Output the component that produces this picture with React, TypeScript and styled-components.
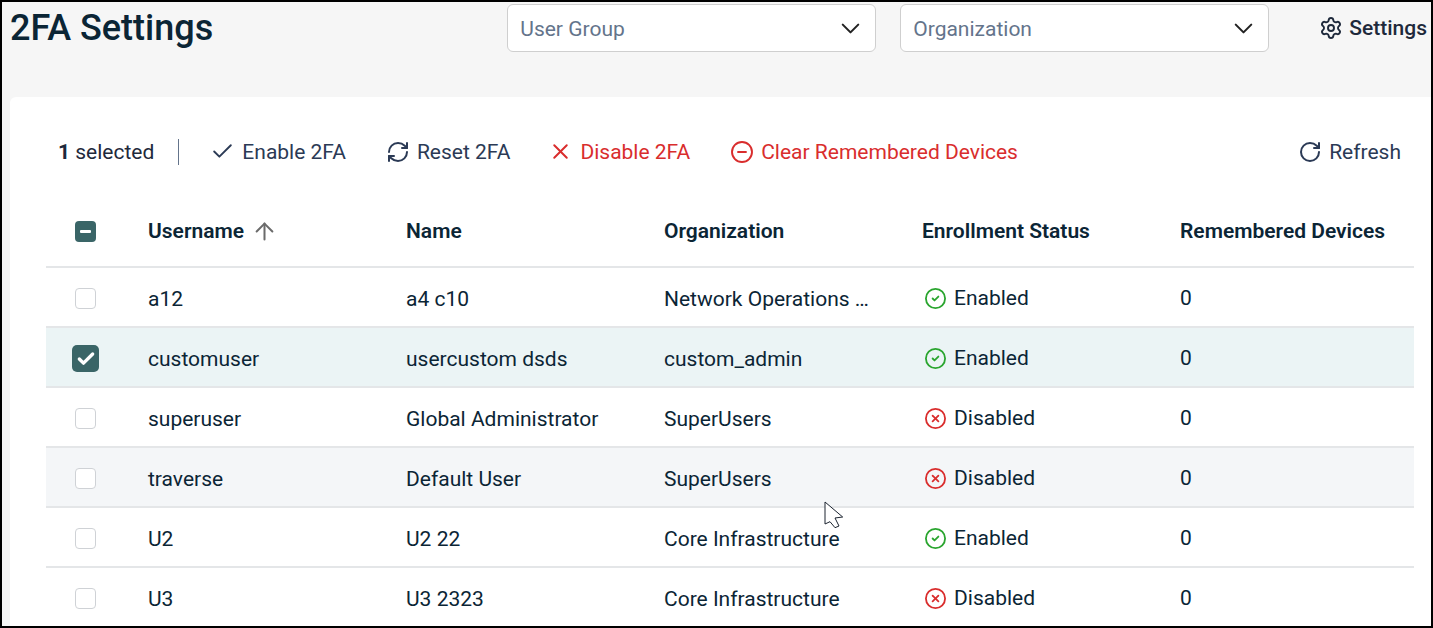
import styled, { createGlobalStyle } from 'styled-components';
import { Check, ChevronDown, ArrowUp, RefreshCw, RotateCw, X, CircleMinus, CircleCheck, CircleX, Settings } from 'lucide-react';

const GlobalStyle = createGlobalStyle`
  html, body {
    margin: 0;
    padding: 0;
    background: #fff;
    font-family: 'Roboto', 'Liberation Sans', sans-serif;
  }
  * { box-sizing: border-box; }
`;

/* Page frame */
const Frame = styled.div`
  position: relative;
  width: 1433px;
  height: 628px;
  border: 2px solid #000;
  background: #f6f6f6;
  overflow: hidden;
`;
const Header = styled.header`
  display: flex;
  align-items: flex-start;
  height: 95px;
  padding: 2px 4px 0 8px;
`;
const Title = styled.h1`
  margin: 0;
  flex: 1;
  font-size: 36px;
  line-height: 48px;
  font-weight: 500;
  color: #0b2535;
`;
const Select = styled.div`
  display: flex;
  align-items: center;
  justify-content: space-between;
  width: 369px;
  height: 48px;
  margin-right: 24px;
  padding: 1px 9px 0 12px;
  background: #fff;
  border: 1px solid #cfcfcf;
  border-radius: 6px;
  font-size: 21px;
  color: #64748b;
  svg { color: #222; margin-top: -1px; }
`;
const SettingsLink = styled.div`
  display: flex;
  align-items: center;
  gap: 6px;
  height: 48px;
  margin-left: 26px;
  font-size: 21px;
  font-weight: 500;
  color: #1e293b;
`;

/* White panel */
const Panel = styled.main`
  margin-left: 8px;
  height: 531px;
  padding: 0 17px 0 36px;
  background: #fff;
  border-radius: 6px 0 0 0;
`;
const Toolbar = styled.div`
  display: flex;
  align-items: center;
  height: 99px;
  padding: 10px 0 0 12px;
  font-size: 21px;
  color: #2b3a55;
`;
const SelectedCount = styled.span`
  color: #1e293b;
  padding-right: 24px;
  margin-right: 31px;
  border-right: 1px solid #64748b;
  line-height: 26px;
  b { font-weight: 700; }
`;
const Action = styled.div<{ $danger?: boolean; $push?: boolean; $after?: number }>`
  display: flex;
  align-items: center;
  gap: 7px;
  margin-right: ${(p) => p.$after ?? 40}px;
  margin-left: ${(p) => (p.$push ? 'auto' : '0')};
  color: ${(p) => (p.$danger ? '#d92d2d' : '#2b3a55')};
`;

/* Table */
const Row = styled.div<{ $head?: boolean; $selected?: boolean; $shade?: boolean }>`
  display: grid;
  grid-template-columns: 102px 258px 258px 258px 258px 234px;
  align-items: center;
  height: ${(p) => (p.$head ? '72px' : '60px')};
  padding-top: ${(p) => (p.$head ? '0' : '2px')};
  border-bottom: 2px solid #e4e6e8;
  font-size: 21px;
  color: #0b2535;
  font-weight: ${(p) => (p.$head ? 600 : 400)};
  background: ${(p) => (p.$selected ? '#ebf4f5' : p.$shade ? '#f4f6f8' : '#fff')};
  &:last-child { border-bottom-color: transparent; }
`;
const CheckCell = styled.div<{ $head?: boolean }>`
  display: flex;
  justify-content: center;
  padding: ${(p) => (p.$head ? '0' : '1px')} 23px 0 0;
`;
const Cell = styled.div<{ $flush?: boolean }>`
  display: flex;
  align-items: center;
  gap: 7px;
  padding-top: ${(p) => (p.$flush ? '0' : '1px')};
  white-space: nowrap;
`;
const Box = styled.span<{ $size?: number; $on?: boolean }>`
  display: flex;
  align-items: center;
  justify-content: center;
  width: ${(p) => p.$size ?? 21}px;
  height: ${(p) => p.$size ?? 21}px;
  border-radius: ${(p) => (p.$size ? 5 : 4)}px;
  background: ${(p) => (p.$on ? '#3a6567' : '#fff')};
  border: ${(p) => (p.$on ? 'none' : '1px solid #cfd2d6')};
  color: #fff;
`;
const Dash = styled.span`
  display: block;
  width: 11px;
  height: 3px;
  border-radius: 1px;
  background: #fff;
`;
const Status = styled.div`
  display: flex;
  align-items: center;
  gap: 7px;
  padding-left: 2px;
  white-space: nowrap;
`;
const Cursor = styled.svg`
  position: absolute;
  left: 822px;
  top: 498px;
`;

const rows = [
  { user: 'a12', name: 'a4 c10', org: 'Network Operations …', on: true },
  { user: 'customuser', name: 'usercustom dsds', org: 'custom_admin', on: true, selected: true },
  { user: 'superuser', name: 'Global Administrator', org: 'SuperUsers', on: false },
  { user: 'traverse', name: 'Default User', org: 'SuperUsers', on: false, shade: true },
  { user: 'U2', name: 'U2 22', org: 'Core Infrastructure', on: true },
  { user: 'U3', name: 'U3 2323', org: 'Core Infrastructure', on: false },
];

const App = () => {
  return (
    <>
      <GlobalStyle />
      <Frame>
        <Header>
          <Title>2FA Settings</Title>
          <Select>User Group<ChevronDown size={31} strokeWidth={1.6} /></Select>
          <Select>Organization<ChevronDown size={31} strokeWidth={1.6} /></Select>
          <SettingsLink><Settings size={24} strokeWidth={1.9} />Settings</SettingsLink>
        </Header>
        <Panel>
          <Toolbar>
            <SelectedCount><b>1</b> selected</SelectedCount>
            <Action><Check size={25} strokeWidth={1.8} />Enable 2FA</Action>
            <Action $after={38}><RefreshCw size={24} strokeWidth={2} />Reset 2FA</Action>
            <Action $danger><X size={25} strokeWidth={1.9} />Disable 2FA</Action>
            <Action $danger><CircleMinus size={24} strokeWidth={1.9} />Clear Remembered Devices</Action>
            <Action $push $after={13}><RotateCw size={24} strokeWidth={2} />Refresh</Action>
          </Toolbar>
          <Row $head>
            <CheckCell $head><Box $on><Dash /></Box></CheckCell>
            <Cell $flush>Username<ArrowUp size={27} strokeWidth={1.8} color="#6b6b6b" /></Cell>
            <Cell $flush>Name</Cell>
            <Cell $flush>Organization</Cell>
            <Cell $flush>Enrollment Status</Cell>
            <Cell $flush>Remembered Devices</Cell>
          </Row>
          {rows.map((row) => (
            <Row key={row.user} $selected={row.selected} $shade={row.shade}>
              <CheckCell>
                {row.selected ? (
                  <Box $on $size={27}><Check size={20} strokeWidth={4} /></Box>
                ) : (
                  <Box />
                )}
              </CheckCell>
              <Cell>{row.user}</Cell>
              <Cell>{row.name}</Cell>
              <Cell>{row.org}</Cell>
              <Status>
                {row.on ? (
                  <CircleCheck size={23} strokeWidth={1.9} color="#2aa52f" />
                ) : (
                  <CircleX size={23} strokeWidth={1.9} color="#d92d2d" />
                )}
                {row.on ? 'Enabled' : 'Disabled'}
              </Status>
              <Cell $flush>0</Cell>
            </Row>
          ))}
        </Panel>
        <Cursor width="20" height="29" viewBox="0 0 20 29">
          <path d="M1 2 V24 L6 21.7 L11 27.7 L15 26 L11 18 L18.7 17 Z" fill="#fff" stroke="#1c2430" strokeWidth="1" />
        </Cursor>
      </Frame>
    </>
  );
};

export default App;
